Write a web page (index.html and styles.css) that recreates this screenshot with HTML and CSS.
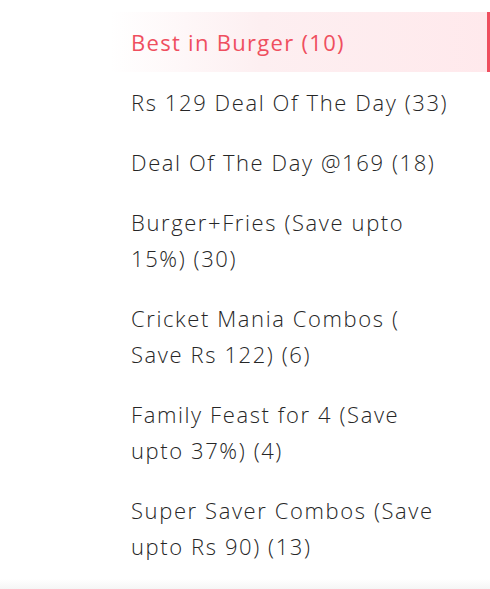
FILE: index.html
```html
<!DOCTYPE html>
<html>
<head>
<meta charset="utf-8">
<link rel="stylesheet" href="styles.css">
</head>
<body>
<div class="page">
  <ul class="menu">
    <li class="item active"><span class="label">Best in Burger (10)</span></li>
    <li class="item"><span class="label">Rs 129 Deal Of The Day (33)</span></li>
    <li class="item"><span class="label">Deal Of The Day @169 (18)</span></li>
    <li class="item"><span class="label">Burger+Fries (Save upto<br>15%) (30)</span></li>
    <li class="item"><span class="label">Cricket Mania Combos (<br>Save Rs 122) (6)</span></li>
    <li class="item"><span class="label">Family Feast for 4 (Save<br>upto 37%) (4)</span></li>
    <li class="item"><span class="label">Super Saver Combos (Save<br>upto Rs 90) (13)</span></li>
  </ul>
  <div class="footer-shade"></div>
</div>
</body>
</html>
```

FILE: styles.css
```css
html, body {
  margin: 0;
  padding: 0;
  background: #ffffff;
}
.page {
  width: 490px;
  height: 589px;
  display: flex;
  flex-direction: column;
  overflow: hidden;
}
.menu {
  list-style: none;
  margin: 12px 0 0 110px;
  padding: 0;
  width: 380px;
}
.item {
  padding: 12px 20px 12px 21px;
  font-family: "Open Sans", sans-serif;
  font-size: 22px;
  line-height: 36px;
  letter-spacing: 1.6px;
  color: #262626;
  font-weight: 300;
  white-space: nowrap;
}
.label {
  display: block;
}
.active {
  color: #ef4f5f;
  font-weight: 400;
  letter-spacing: 1.3px;
  background: linear-gradient(to right, #ffffff 0%, #fdeff1 40%, #ffe9ec 100%);
  border-right: 3px solid #ef4f5f;
}
.footer-shade {
  margin-top: auto;
  height: 10px;
  background: linear-gradient(to bottom, #ffffff, #f5f5f5);
}
```
